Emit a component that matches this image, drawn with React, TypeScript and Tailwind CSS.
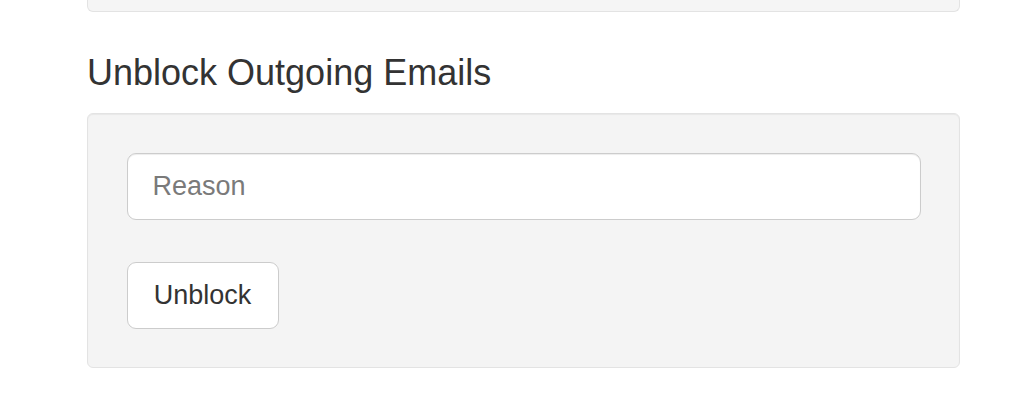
export default function App() {
  return (
    <div className="min-h-[402px] bg-white pl-[87px] font-['Liberation_Sans',Arial,sans-serif] text-[#333]">
      <div className="w-[873px]">
        {/* tail of the previous well */}
        <div className="h-[12px] rounded-b-[6px] border-x-[1.5px] border-b-[1.5px] border-[#e3e3e3] bg-[#f5f5f5]" />

        <h3 className="mt-[41px] text-[36px] leading-[40px] font-normal text-[#333]">
          Unblock Outgoing Emails
        </h3>

        <div className="mt-[20px] rounded-[6px] border-[1.5px] border-[#e3e3e3] bg-[#f4f4f4] p-[38.5px] shadow-[inset_0_1px_1px_rgba(0,0,0,0.05)]">
          <input
            type="text"
            placeholder="Reason"
            className="block h-[67px] w-full rounded-[9px] border-[1.5px] border-[#ccc] bg-white px-[25px] text-[27px] text-[#555] shadow-[inset_0_1px_1px_rgba(0,0,0,0.075)] outline-none placeholder:text-[#7a7a7a]"
          />
          <button
            type="button"
            className="mt-[42px] flex h-[67px] w-[152px] items-center justify-center rounded-[9px] border-[1.5px] border-[#ccc] bg-white text-[27px] text-[#333]"
          >
            Unblock
          </button>
        </div>
      </div>
    </div>
  );
}
